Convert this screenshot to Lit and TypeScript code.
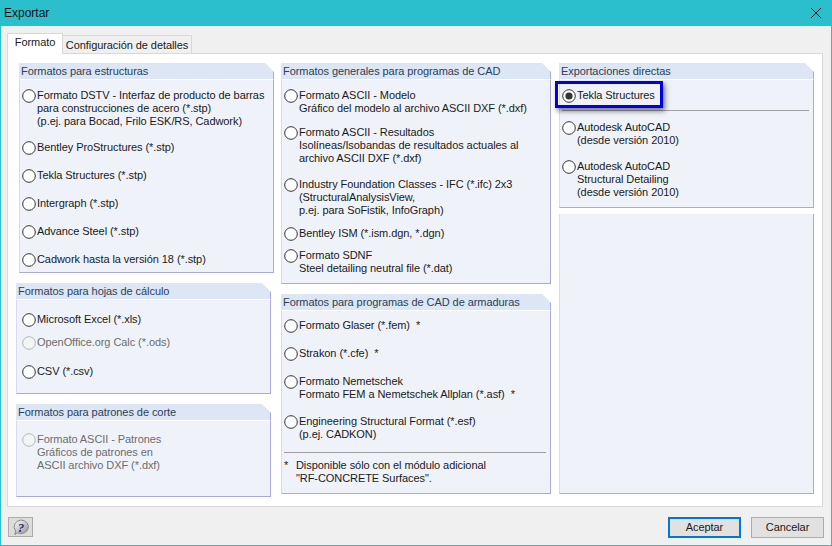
import { LitElement, html, svg, css } from "lit";
import { customElement } from "lit/decorators.js";

type Item = { lines: string[]; gap: number; checked?: boolean; disabled?: boolean };
type Group = { title: string; height: number; top: number; left: number; cls?: string; items: Item[]; foot?: string[]; sep?: number };

const c1: Group[] = [
  { title: "Formatos para estructuras", height: 210, top: 9, left: 2, cls: "shift", items: [
    { lines: ["Formato DSTV - Interfaz de producto de barras", "para construcciones de acero (*.stp)", "(p.ej. para Bocad, Frilo ESK/RS, Cadwork)"], gap: 13 },
    { lines: ["Bentley ProStructures (*.stp)"], gap: 15 },
    { lines: ["Tekla Structures (*.stp)"], gap: 15 },
    { lines: ["Intergraph (*.stp)"], gap: 15 },
    { lines: ["Advance Steel (*.stp)"], gap: 15 },
    { lines: ["Cadwork hasta la versión 18 (*.stp)"], gap: 0 },
  ]},
  { title: "Formatos para hojas de cálculo", height: 111, top: 13, left: 5, items: [
    { lines: ["Microsoft Excel (*.xls)"], gap: 10 },
    { lines: ["OpenOffice.org Calc (*.ods)"], gap: 16, disabled: true },
    { lines: ["CSV (*.csv)"], gap: 0 },
  ]},
  { title: "Formatos para patrones de corte", height: 93, top: 12, left: 5, items: [
    { lines: ["Formato ASCII - Patrones", "Gráficos de patrones en", "ASCII archivo DXF (*.dxf)"], gap: 0, disabled: true },
  ]},
];
const c2: Group[] = [
  { title: "Formatos generales para programas de CAD", height: 221, top: 9, left: 2, items: [
    { lines: ["Formato ASCII - Modelo", "Gráfico del modelo al archivo ASCII DXF (*.dxf)"], gap: 11 },
    { lines: ["Formato ASCII - Resultados", "Isolíneas/Isobandas de resultados actuales al", "archivo ASCII DXF (*.dxf)"], gap: 13 },
    { lines: ["Industry Foundation Classes - IFC (*.ifc) 2x3", "(StructuralAnalysisView,", "p.ej. para SoFistik, InfoGraph)"], gap: 10 },
    { lines: ["Bentley ISM (*.ism.dgn, *.dgn)"], gap: 9 },
    { lines: ["Formato SDNF", "Steel detailing neutral file (*.dat)"], gap: 0 },
  ]},
  { title: "Formatos para programas de CAD de armaduras", height: 200, top: 8, left: 2, items: [
    { lines: ["Formato Glaser (*.fem)  *"], gap: 15 },
    { lines: ["Strakon (*.cfe)  *"], gap: 15 },
    { lines: ["Formato Nemetschek", "Formato FEM a Nemetschek Allplan (*.asf)  *"], gap: 14 },
    { lines: ["Engineering Structural Format (*.esf)", "(p.ej. CADKON)"], gap: 0 },
  ], sep: 11, foot: ["Disponible sólo con el módulo adicional", "\"RF-CONCRETE Surfaces\"."] },
];
const c3a: Group = { title: "Exportaciones directas", height: 145, top: 9, left: 2, items: [
  { lines: ["Tekla Structures"], gap: 0, checked: true },
  { lines: ["Autodesk AutoCAD", "(desde versión 2010)"], gap: 13 },
  { lines: ["Autodesk AutoCAD", "Structural Detailing", "(desde versión 2010)"], gap: 0 },
]};

@customElement("app-root")
export class AppRoot extends LitElement {
  static styles = css`
    :host { display: block; width: 832px; height: 546px; font: 11px/13px "Liberation Sans", Arial, sans-serif; letter-spacing: -0.07px; color: #1a1a1a; }
    * { box-sizing: border-box; }
    .win { width: 832px; height: 546px; display: flex; flex-direction: column; background: #f0f0f0; border: 1px solid #2bbfcd; border-top: 0; }
    .title { height: 26px; flex: none; background: #2bbfcd; display: flex; align-items: center; justify-content: space-between; padding: 0 10px 0 4px; margin: 0 -1px; font-size: 12px; letter-spacing: 0; color: #111; }
    .title svg { display: block; }
    .content { flex: 1; display: flex; flex-direction: column; padding: 7px 7px 0 6px; }
    .tabs { display: flex; height: 20px; align-items: flex-end; position: relative; z-index: 1; }
    .tab { border: 1px solid #d9d9d9; display: flex; align-items: center; justify-content: center; white-space: nowrap; }
    .tab.on { width: 56px; height: 21px; background: #fff; border-bottom: 0; padding-bottom: 3px; margin-bottom: -1px; }
    .tab.off { width: 130px; height: 18px; background: #f0f0f0; margin-left: -1px; border-bottom: 0; padding-top: 1px; }
    .panel { width: 816px; height: 454px; background: #fff; border: 1px solid #d9d9d9; display: flex; gap: 7px; padding: 9px 0 0 8px; }
    .col { display: flex; flex-direction: column; gap: 10px; width: 258px; flex: none; }
    .col.mid { width: 270px; }
    .col.right { gap: 6px; width: 255px; margin-left: 1px; height: 431px; }
    .group { display: flex; flex-direction: column; position: relative; width: 255px; }
    .mid .group { width: 270px; }
    .group.shift { margin-left: 3px; }
    .head { height: 16px; flex: none; background: #dce6f4; color: #2d3f55; padding: 2px 0 0 2px; border-right: 1px solid #a9a9e0; clip-path: polygon(0 0, calc(100% - 9px) 0, 100% 9px, 100% 100%, 0 100%); white-space: nowrap; }
    .body { flex: 1; background: #eff3f9; border-right: 1px solid #a9a9e0; border-bottom: 1px solid #a9a9e0; border-left: 1px solid #d6dcf0; border-top: 1px solid #fff; }
    .item { display: flex; white-space: pre; }
    .item.dis { color: #6d6d6d; }
    .radio { width: 14px; height: 14px; flex: none; margin: 0 1px -1px 0; display: block; }
    .sep { height: 1px; background: #a0a0a0; margin-right: 4px; }
    .foot { display: flex; white-space: pre; padding-top: 6px; }
    .star { width: 12px; }
    .sel { position: relative; padding-bottom: 8px; margin-bottom: 10px; border-bottom: 1px solid #a0a0a0; margin-right: 4px; }
    .hl { position: absolute; left: -7px; top: -8px; width: 108px; height: 27px; border: 3px solid #0000e0; box-shadow: 2px 3px 5px rgba(0,0,0,.5); }
    .blank { flex: 1; background: #eff3f9; border-right: 1px solid #a9a9e0; border-bottom: 1px solid #a9a9e0; border-left: 1px solid #d6dcf0; }
    .foot-bar { flex: 1; display: flex; align-items: flex-start; justify-content: space-between; padding: 10px 0 0 1px; }
    .help { width: 25px; height: 20px; background: #dcdcdc; border: 1px solid #acacac; display: flex; align-items: center; justify-content: center; }
    .btns { display: flex; gap: 10px; }
    .btn { width: 73px; height: 21px; background: #e1e1e1; border: 1px solid #adadad; display: flex; align-items: center; justify-content: center; }
    .btn.def { border: 2px solid #0078d7; }
  `;

  radio(it: Item) {
    const stroke = it.disabled ? "#b5b5b5" : "#333";
    const fill = it.disabled ? "#f4f4f4" : "#fff";
    return html`<svg class="radio" viewBox="0 0 14 14">
      <circle cx="7" cy="7" r="6.3" fill=${fill} stroke=${stroke} stroke-width="1"></circle>
      ${it.checked ? svg`<circle cx="7" cy="7" r="3.6" fill="#333"></circle>` : ""}
    </svg>`;
  }

  item(it: Item) {
    return html`<div class="item ${it.disabled ? "dis" : ""}" style="margin-bottom:${it.gap}px">
      ${this.radio(it)}<div>${it.lines.map((l) => html`<div>${l}</div>`)}</div>
    </div>`;
  }

  group(g: Group) {
    return html`<div class="group ${g.cls ?? ""}" style="height:${g.height}px">
      <div class="head">${g.title}</div>
      <div class="body" style="padding:${g.top}px 0 0 ${g.left}px">
        ${g.items.map((i) => this.item(i))}
        ${g.sep ? html`<div class="sep" style="margin-top:${g.sep}px"></div>` : ""}
        ${g.foot ? html`<div class="foot"><span class="star">*</span><div>${g.foot.map((l) => html`<div>${l}</div>`)}</div></div>` : ""}
      </div>
    </div>`;
  }

  render() {
    return html`<div class="win">
      <div class="title"><span>Exportar</span>
        <svg width="12" height="12" viewBox="0 0 12 12"><path d="M1 1L11 11M11 1L1 11" stroke="#111" stroke-width="1"></path></svg>
      </div>
      <div class="content">
        <div class="tabs"><div class="tab on">Formato</div><div class="tab off">Configuración de detalles</div></div>
        <div class="panel">
          <div class="col">${c1.map((g) => this.group(g))}</div>
          <div class="col mid">${c2.map((g) => this.group(g))}</div>
          <div class="col right">
            <div class="group" style="height:${c3a.height}px">
              <div class="head">${c3a.title}</div>
              <div class="body" style="padding:${c3a.top}px 0 0 ${c3a.left}px">
                <div class="sel"><div class="hl"></div>${this.item(c3a.items[0])}</div>
                <div style="margin-bottom:${c3a.items[1].gap}px">${this.item({ ...c3a.items[1], gap: 0 })}</div>
                ${this.item(c3a.items[2])}
              </div>
            </div>
            <div class="blank"></div>
          </div>
        </div>
        <div class="foot-bar">
          <div class="help"><svg width="18" height="17" viewBox="0 0 18 17">
            <defs><linearGradient id="b" x1="0" y1="0" x2="1" y2="1"><stop offset="0" stop-color="#fff"></stop><stop offset="1" stop-color="#8f8f8f"></stop></linearGradient></defs>
            <path d="M9 1a7.5 6.8 0 1 1-3.8 12.7L3 15.8l.6-4A7.5 6.8 0 0 1 9 1z" fill="url(#b)" stroke="#8a8a8a" stroke-width="1"></path>
            <text x="9" y="12.5" font-size="13" font-weight="700" font-style="italic" font-family="Liberation Serif" text-anchor="middle" fill="#26307a">?</text>
          </svg></div>
          <div class="btns"><div class="btn def">Aceptar</div><div class="btn">Cancelar</div></div>
        </div>
      </div>
    </div>`;
  }
}
